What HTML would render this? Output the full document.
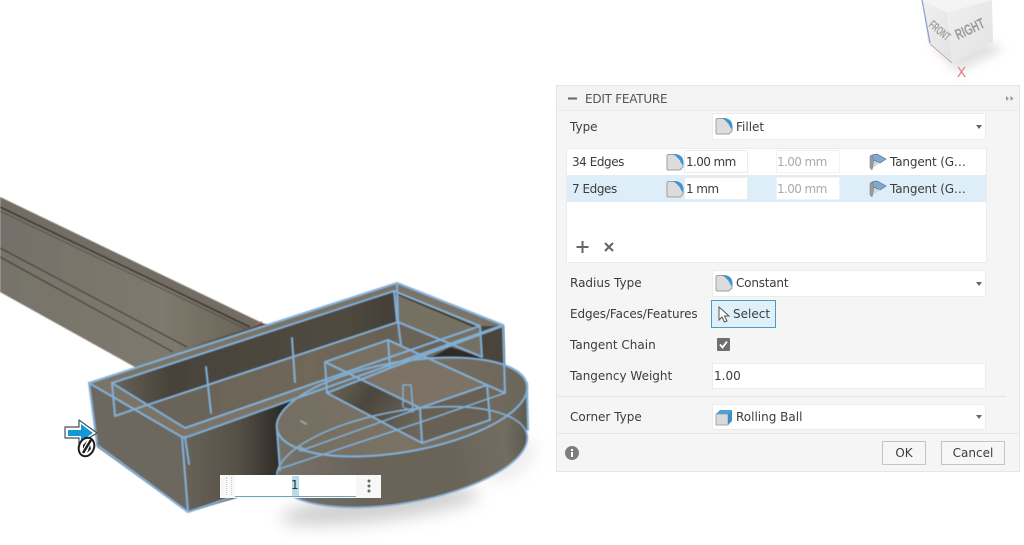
<!DOCTYPE html>
<html><head><meta charset="utf-8"><style>
html,body{margin:0;padding:0;background:#fff}
#r{position:relative;width:1024px;height:545px;overflow:hidden;background:#fff;font-family:"DejaVu Sans",sans-serif;font-size:12px;color:#3c3c3c}
#r>svg{position:absolute;left:0;top:0}
.a{position:absolute;white-space:nowrap}
.l{line-height:16px}
.n{letter-spacing:-.6px}
.e{letter-spacing:-.45px}
.f{position:absolute;background:#fff;border:1px solid #ececec;box-sizing:border-box}
.c{position:absolute;left:976px;width:0;height:0;border-left:3px solid transparent;border-right:3px solid transparent;border-top:4px solid #666}
.b{position:absolute;box-sizing:border-box;border:1px solid #c4c4c4;background:#f6f6f6;text-align:center;line-height:22px}
.g{color:#aaa}
.i{position:absolute}
</style></head><body><div id="r">
<svg width="1024" height="545" viewBox="0 0 1024 545">
<defs>
<linearGradient id="beam" x1="0" y1="0" x2="1" y2="0"><stop offset="0" stop-color="#74706a"/><stop offset=".65" stop-color="#7f7a6d"/><stop offset="1" stop-color="#6a6458"/></linearGradient>
<linearGradient id="beam2" x1="0" y1="0" x2="1" y2="0"><stop offset="0" stop-color="#77736b"/><stop offset=".55" stop-color="#7f7a6d"/><stop offset=".7" stop-color="#5a554b"/><stop offset="1" stop-color="#48443b"/></linearGradient>
<linearGradient id="front" x1="182" y1="0" x2="285" y2="0" gradientUnits="userSpaceOnUse"><stop offset="0" stop-color="#69645a"/><stop offset=".55" stop-color="#555046"/><stop offset="1" stop-color="#2a2723"/></linearGradient>
<linearGradient id="wall" x1="112" y1="0" x2="398" y2="0" gradientUnits="userSpaceOnUse"><stop offset="0" stop-color="#68635a"/><stop offset=".2" stop-color="#47433b"/><stop offset=".8" stop-color="#504a40"/><stop offset="1" stop-color="#433e36"/></linearGradient>
<linearGradient id="floor" x1="147" y1="0" x2="480" y2="0" gradientUnits="userSpaceOnUse"><stop offset="0" stop-color="#69635a"/><stop offset=".5" stop-color="#706759"/><stop offset="1" stop-color="#5f594e"/></linearGradient>
<linearGradient id="cyl" x1="275" y1="0" x2="530" y2="0" gradientUnits="userSpaceOnUse"><stop offset="0" stop-color="#78736a"/><stop offset=".35" stop-color="#69635a"/><stop offset=".7" stop-color="#6a6459"/><stop offset=".9" stop-color="#736d62"/><stop offset="1" stop-color="#5c574d"/></linearGradient>
<linearGradient id="ctop" x1="280" y1="0" x2="520" y2="0" gradientUnits="userSpaceOnUse"><stop offset="0" stop-color="#746e62"/><stop offset=".5" stop-color="#7b7365"/><stop offset="1" stop-color="#6d665a"/></linearGradient>
<linearGradient id="pit" x1="327" y1="360" x2="420" y2="420" gradientUnits="userSpaceOnUse"><stop offset="0" stop-color="#787164"/><stop offset=".5" stop-color="#4b463d"/><stop offset="1" stop-color="#6c665a"/></linearGradient>
<linearGradient id="cube" x1="0" y1="0" x2="1" y2="1"><stop offset="0" stop-color="#f0f0f0"/><stop offset="1" stop-color="#e2e2e2"/></linearGradient>
<filter id="bl" x="-40%" y="-100%" width="180%" height="300%"><feGaussianBlur stdDeviation="8"/></filter>
<filter id="bs" x="-40%" y="-60%" width="180%" height="220%"><feGaussianBlur stdDeviation="5"/></filter>
<filter id="s"><feGaussianBlur stdDeviation=".4"/></filter>
</defs>

<!-- view cube -->
<polygon points="930,44 993,42 1003,50 958,72" fill="#c4c4c4" opacity=".5" filter="url(#bs)"/>
<polygon points="922,0 992,0 947,12" fill="#f4f4f4"/>
<polygon points="922,0 947,12 952,63 928,43" fill="url(#cube)"/>
<polygon points="947,12 992,0 993,42 952,63" fill="url(#cube)"/>
<line x1="922" y1="0" x2="930" y2="43" stroke="#8d9ad4" stroke-width="1.200"/>
<line x1="930" y1="44" x2="952" y2="63" stroke="#cfa8a8" stroke-width="1"/>
<text transform="translate(928,26) rotate(40) scale(.58,1)" font-family="Liberation Sans,sans-serif" font-size="12" font-weight="bold" fill="#a0a0a0">FRONT</text>
<text transform="translate(958,40) rotate(-25) scale(.66,1)" font-family="Liberation Sans,sans-serif" font-size="15" font-weight="bold" fill="#9a9a9a">RIGHT</text>
<text transform="translate(957,77) scale(.9,1)" font-family="Liberation Sans,sans-serif" font-size="15" fill="#e2787a">X</text>

<!-- shadow -->
<ellipse cx="380" cy="506" rx="100" ry="15" transform="rotate(-7 380 506)" fill="#aaa" opacity=".55" filter="url(#bl)"/>
<ellipse cx="510" cy="460" rx="30" ry="16" transform="rotate(-35 510 460)" fill="#c4c4c4" opacity=".3" filter="url(#bl)"/>

<g filter="url(#s)">
<!-- beam -->
<polygon points="0,197 262,323 320,340 170,390 133,366 0,292" fill="url(#beam2)"/>
<polygon points="0,197 262,323 250,328 0,208" fill="#736d64"/>
<polygon points="0,208 250,328 187,347 0,248" fill="url(#beam)"/>
<line x1="0" y1="207" x2="250" y2="327" stroke="#3a362e" stroke-width="1.600"/>
<line x1="0" y1="211" x2="246" y2="329" stroke="#55504a" stroke-width="1"/>
<line x1="0" y1="248" x2="187" y2="347" stroke="#38342d" stroke-width="1"/>
<line x1="0" y1="257" x2="173" y2="352" stroke="#38342d" stroke-width="1"/>
<line x1="256" y1="324" x2="262" y2="322" stroke="#a5675c" stroke-width="1.500"/>

<!-- box -->
<polygon points="89,383 182,437 188,512 97,447" fill="#6d685f"/>
<polygon points="182,437 504,325 506,395 300,480 188,512" fill="url(#front)"/>
<polygon points="89,383 397,283 503,325 182,437" fill="#7a7366"/>
<polygon points="112,383 394,291 398,322 147,405" fill="url(#wall)"/>
<polygon points="147,405 398,322 480,326 185,428" fill="url(#floor)"/>
<polygon points="394,291 480,326 482,357 398,322" fill="#767063"/>
<polygon points="395,292 478,327 478,329 395,294" fill="#3a342b"/>
<polygon points="398,322 482,357 430,372 390,368" fill="#6a6458"/>
<polygon points="427,360 450,347 482,357 480,362" fill="#2d2a25"/>
<polygon points="480,326 503,326 505,393 482,357" fill="#4a453b"/>

<!-- cylinder -->
<ellipse cx="402" cy="457" rx="127" ry="46" transform="rotate(-10 402 457)" fill="url(#cyl)"/>
<polygon points="277,430 527,383 528,430 280,470" fill="url(#cyl)"/>
<ellipse cx="402" cy="407" rx="127" ry="45" transform="rotate(-10 402 407)" fill="url(#ctop)"/>
<polygon points="327,362 388,340 487,385 420,408" fill="#7b7366"/>
<polygon points="327,362 420,408 422,443 327,393" fill="url(#pit)"/>
<polygon points="420,408 487,385 490,420 423,443" fill="#676155"/>
<polygon points="388,340 390,368 327,393 327,362" fill="#787064" opacity=".8"/>
</g>

<!-- wires -->
<g fill="none" stroke="#82b2dd" stroke-width="2.100" stroke-linejoin="round" stroke-linecap="round" opacity=".95" filter="url(#s)">
<path d="M89,383 L397,283 L503,325 L187,437 L182,437 Z"/>
<path d="M112,383 L394,291 L480,326 L185,428 Z"/>
<path d="M89,383 L97,442 M97,445 L188,512 L182,437 M188,512 L232,497"/>
<path d="M112,383 L115,416 L147,405 L398,322 L482,357"/>
<path d="M397,283 L398,322 M394,291 L397,322"/>
<path d="M480,326 L482,357 M503,325 L505,393 L487,385 M503,326 L390,368 L327,393"/>
<path d="M398,322 L401,345"/>
<path d="M206,367 L211,413 M292,338 L295,382 M185,437 L189,464"/>
<path d="M388,340 L325,362 L327,393 L422,443 L490,420 L487,385 L420,408 L325,362 M388,340 L487,385 M388,340 L390,368 M420,408 L422,443"/>
<path d="M403,407 L403,385 L411,385 L413,412 M405,408 L413,412" stroke-width="1.500"/>
<ellipse cx="402" cy="407" rx="127" ry="45" transform="rotate(-10 402 407)"/>
<ellipse cx="402" cy="457" rx="127" ry="46" transform="rotate(-10 402 457)" stroke-width="1.700"/>
<path d="M527,383 L528,430 M277,430 L280,470"/>
<path d="M301,421 L306,424 M300,447 L304,449" stroke="#a9a499" stroke-width="2"/>
<path d="M300,451 L420,408 M282,468 L427,420 M427,420 L505,393" stroke-width="1.600"/>
</g>

<!-- cursor arrow -->
<path d="M65,427 H79 V420 L97,433 L79,444 V438 H65 Z" fill="#fff" stroke="#44515a" stroke-width="1.200" stroke-linejoin="round"/>
<path d="M68,430 H81 V424 L93,433 L81,441 V436 H68 Z" fill="#1597d5"/>
<ellipse cx="86.500" cy="447" rx="7.500" ry="9.500" transform="rotate(22 86.500 447)" fill="#fff" stroke="#1d1d1d" stroke-width="2"/>
<path d="M83,453 L91,440" stroke="#1d1d1d" stroke-width="2.500"/>
<path d="M83,445 L87,441 L83,449 Z M91,449 L87,453 L90,445 Z" fill="#1d1d1d"/>

<!-- panel -->
<rect x="556.500" y="85.500" width="463" height="386" fill="#f5f5f5" stroke="#e6e6e6"/>
<rect x="557" y="86" width="462" height="24" fill="#f3f3f3"/>
<line x1="557" y1="110.500" x2="1019" y2="110.500" stroke="#e8e8e8"/>
<line x1="557" y1="433.500" x2="1019" y2="433.500" stroke="#e6e6e6"/>
<line x1="557" y1="396.500" x2="1006" y2="396.500" stroke="#e4e4e4"/>
<rect x="568" y="97.500" width="9" height="2" fill="#666"/>
<path d="M1006,96 l3,2.500 l-3,2.500 Z M1010.500,96 l3,2.500 l-3,2.500 Z" fill="#999"/>

<symbol id="fil" viewBox="0 0 18 18">
<path d="M1,3 Q1,1.500 3,1.500 H9 Q17,2 17,10 V14 L14,17 H2 Q1,17 1,16 Z" fill="#dcdcdc" stroke="#a0a0a0" stroke-width="1"/>
<path d="M7,1 H9 Q17.500,2 17.500,10 V13 L15,10 Q14,6 7,1 Z" fill="#3f96cf"/>
</symbol>
<symbol id="tan" viewBox="0 0 18 18">
<path d="M3,2 L8,1 L17,6 L11,10 L4,7 Z" fill="#7fa9cf" stroke="#4d7599" stroke-width=".7"/>
<path d="M1,3 L3,2 L5,8 L3,17 L1,15 Z" fill="#9a9a9a" stroke="#777" stroke-width=".5"/>
<path d="M5,8 L11,10 L4,15 Z" fill="#cfd8df"/>
</symbol>
</svg>

<div class="a l" style="left:585px;top:91px;color:#555;letter-spacing:-.25px">EDIT FEATURE</div>

<div class="a l" style="left:570px;top:119px">Type</div>
<div class="f" style="left:712px;top:113px;width:274px;height:27px"></div>
<svg class="i" style="left:715px;top:117px" width="18" height="18"><use href="#fil"/></svg>
<div class="a l" style="left:736px;top:119px">Fillet</div>
<div class="c" style="top:125px"></div>

<div class="f" style="left:566px;top:148px;width:421px;height:115px"></div>
<div class="a" style="left:567px;top:175px;width:419px;height:27px;background:#deeef8"></div>
<div class="a l e" style="left:572px;top:154px">34 Edges</div>
<div class="a l e" style="left:572px;top:181px">7 Edges</div>
<svg class="i" style="left:666px;top:153px" width="18" height="18"><use href="#fil"/></svg>
<svg class="i" style="left:666px;top:180px" width="18" height="18"><use href="#fil"/></svg>
<div class="f" style="left:684px;top:150px;width:64px;height:23px"></div>
<div class="f" style="left:684px;top:177px;width:64px;height:23px"></div>
<div class="a l n" style="left:686px;top:154px">1.00 mm</div>
<div class="a l n" style="left:686px;top:181px">1 mm</div>
<div class="f" style="left:776px;top:150px;width:64px;height:23px;border-color:#f2f2f2"></div>
<div class="f" style="left:776px;top:177px;width:64px;height:23px;border-color:#f2f2f2"></div>
<div class="a l g n" style="left:777px;top:154px">1.00 mm</div>
<div class="a l g n" style="left:777px;top:181px">1.00 mm</div>
<svg class="i" style="left:869px;top:153px" width="18" height="18"><use href="#tan"/></svg>
<svg class="i" style="left:869px;top:180px" width="18" height="18"><use href="#tan"/></svg>
<div class="a l" style="left:890px;top:154px;letter-spacing:-.15px">Tangent (G…</div>
<div class="a l" style="left:890px;top:181px;letter-spacing:-.15px">Tangent (G…</div>
<svg class="i" style="left:575px;top:240px" width="40" height="14"><path d="M7.500,1 V13 M1.500,7 H13.500" stroke="#666" stroke-width="2"/><path d="M30,3 L38,11 M38,3 L30,11" stroke="#666" stroke-width="2"/></svg>

<div class="a l" style="left:570px;top:275px">Radius Type</div>
<div class="f" style="left:712px;top:270px;width:274px;height:27px"></div>
<svg class="i" style="left:715px;top:274px" width="18" height="18"><use href="#fil"/></svg>
<div class="a l" style="left:736px;top:275px;letter-spacing:-.2px">Constant</div>
<div class="c" style="top:282px"></div>

<div class="a l" style="left:570px;top:306px;letter-spacing:-.1px">Edges/Faces/Features</div>
<div class="a" style="left:711px;top:300px;width:65px;height:28px;box-sizing:border-box;background:#dff0fa;border:1px solid #4c9cc0"></div>
<svg class="i" style="left:717px;top:306px" width="14" height="18"><path d="M2,1 V14 L5,11 L7.500,16 L10,15 L7.500,10 H12 Z" fill="#fff" stroke="#555" stroke-width="1"/></svg>
<div class="a l" style="left:733px;top:306px">Select</div>

<div class="a l" style="left:570px;top:337px">Tangent Chain</div>
<div class="a" style="left:717px;top:338px;width:13px;height:13px;background:#6f6f6f;border-radius:1px"></div>
<svg class="i" style="left:717px;top:338px" width="13" height="13"><path d="M3,6.500 L5.500,9.500 L10,3.500" fill="none" stroke="#fff" stroke-width="1.800"/></svg>

<div class="a l" style="left:570px;top:368px">Tangency Weight</div>
<div class="f" style="left:712px;top:363px;width:274px;height:26px"></div>
<div class="a l" style="left:714px;top:368px">1.00</div>

<div class="a l" style="left:570px;top:409px">Corner Type</div>
<div class="f" style="left:712px;top:404px;width:274px;height:26px"></div>
<svg class="i" style="left:715px;top:408px" width="18" height="18"><path d="M1,6 H13 V17 H1 Z" fill="#d9d9d9" stroke="#a8a8a8"/><path d="M1,6 L5,2 H17 L13,6 Z" fill="#4d9fd6"/><path d="M13,6 L17,2 V13 L13,17 Z" fill="#3e8fc6"/></svg>
<div class="a l" style="left:736px;top:409px">Rolling Ball</div>
<div class="c" style="top:415px"></div>

<svg class="i" style="left:564px;top:445px" width="16" height="16"><circle cx="8" cy="8" r="7" fill="#7d7d7d"/><rect x="7" y="7" width="2" height="5" fill="#fff"/><rect x="7" y="4" width="2" height="2" fill="#fff"/></svg>
<div class="b" style="left:882px;top:441px;width:44px;height:24px">OK</div>
<div class="b" style="left:941px;top:441px;width:64px;height:24px">Cancel</div>

<!-- floating input -->
<div class="a" style="left:220px;top:475px;width:161px;height:23px;background:#f7f7f7"></div>
<div class="a" style="left:235px;top:475px;width:121px;height:21px;background:#fff;border-bottom:1px solid #6aa5b8"></div>
<div class="a" style="left:226px;top:477px;width:4px;height:18px;border-left:1px dotted #ccc;border-right:1px dotted #ccc"></div>
<div class="a" style="left:292px;top:476px;width:7px;height:20px;background:#b7dcee"></div>
<div class="a l" style="left:291px;top:477px;color:#333">1</div>
<svg class="i" style="left:366px;top:478px" width="6" height="16"><circle cx="3" cy="3" r="1.500" fill="#666"/><circle cx="3" cy="8" r="1.500" fill="#666"/><circle cx="3" cy="13" r="1.500" fill="#666"/></svg>
</div></body></html>
